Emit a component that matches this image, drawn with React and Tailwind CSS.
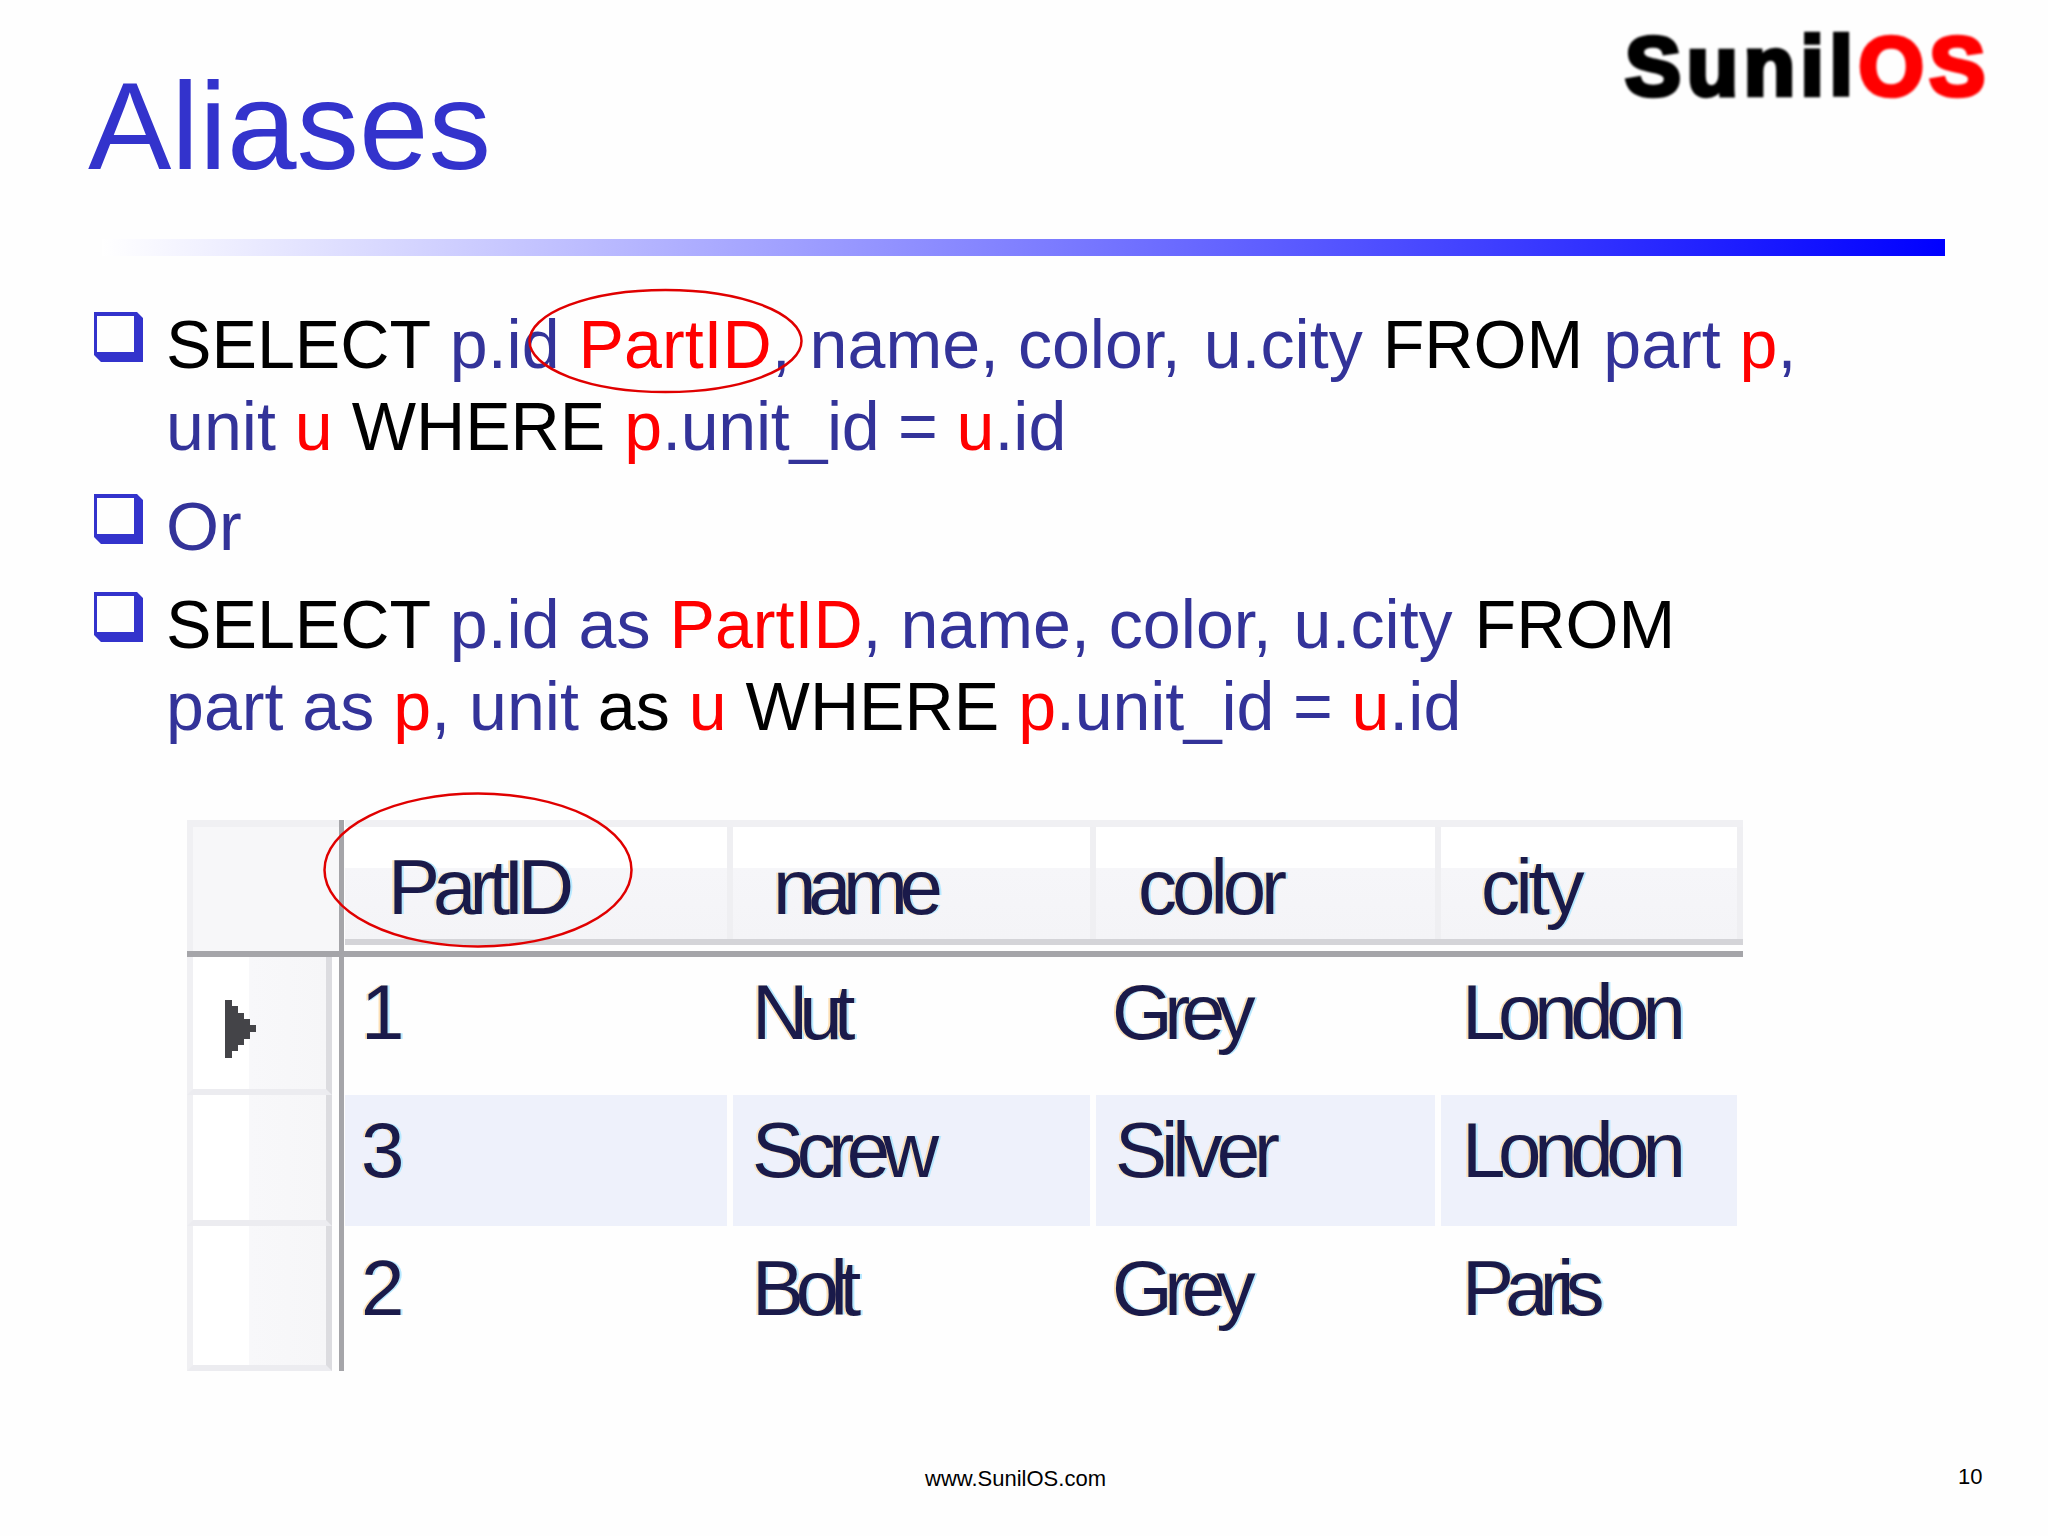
const B = ({ children, className = "" }) => <span className={"text-[#333399] " + className}>{children}</span>;
const R = ({ children }) => <span className="text-[#ff0000]">{children}</span>;

const Bullet = () => (
  <svg viewBox="0 0 49 50" className="w-[49px] h-[50px] mt-[9px] shrink-0 fill-[#3333cc]">
    <path fillRule="evenodd" d="M0 0H43L49 6V50H7L0 43ZM3 4V40H40V4Z" />
  </svg>
);

const Item = ({ className = "", children }) => (
  <div className={"flex gap-[23px] pl-[94px] " + className}>
    <Bullet />
    <p className="text-[68.15px] leading-[82px] text-black whitespace-nowrap">{children}</p>
  </div>
);

const cellText =
  "text-[78px] leading-none text-[#1a1a4a] [text-shadow:-2px_0_#fde0b5,2px_0_#b6e8ff] whitespace-nowrap";

const widths = ["w-[382px]", "w-[357px]", "w-[339px]", "w-[296px]"];
const headPad = ["pl-[43px]", "pl-[40px]", "pl-[42px]", "pl-[40px]"];
const dataPad = ["pl-[16px]", "pl-[19px]", "pl-[16px]", "pl-[21px]"];

const HeaderCell = ({ i, track, children }) => (
  <div className={"h-full flex items-end pb-[13px] bg-[linear-gradient(#ffffff_0,#ffffff_37%,#f6f6f9_37%,#f4f4f7_100%)] " + widths[i] + " " + headPad[i]}>
    <span className={cellText + " " + track}>{children}</span>
  </div>
);

const RowHead = ({ h, arrow }) => (
  <div className={"w-[145px] flex items-center pl-[32px] border-b-[6px] border-b-[#ececf0] border-r-[6px] border-r-[#dcdce0] border-l-[6px] border-l-[#f0f0f3] bg-[linear-gradient(90deg,#ffffff_0,#ffffff_42%,#f8f8fa_42%,#f6f6f8_100%)] " + h}>
    {arrow && (
      <svg viewBox="0 0 31 58" className="w-[31px] h-[58px] fill-[#444448] mt-[12px] blur-[0.6px]">
        <path d="M0 0H7V6H13V13H19V19H25V25H31V32H25V39H19V45H13V51H7V58H0Z" />
      </svg>
    )}
  </div>
);

const Row = ({ h, shade, arrow, pt, cells }) => (
  <div className={"flex " + h}>
    <RowHead h={h} arrow={arrow} />
    <div className="w-[7px]" />
    <div className="w-[5px] mr-[1px] bg-[#a5a5a9]" />
    <div className="flex gap-[6px]">
      {cells.map((c, i) => (
        <div key={i} className={"flex items-start " + pt + " " + widths[i] + " " + dataPad[i] + " " + (shade ? "bg-[#eef1fb]" : "")}>
          <span className={cellText + " " + c.track}>{c.t}</span>
        </div>
      ))}
    </div>
  </div>
);

export default function App() {
  return (
    <div className="relative w-[2048px] h-[1536px] bg-[#fefefe] font-['Liberation_Sans',Arial,sans-serif] overflow-hidden">
      <header className="h-[239px] flex justify-between items-start pl-[88px] pr-[57px]">
        <h1 className="pt-[63px] text-[125px] leading-none text-[#3333cc]">Aliases</h1>
        <div className="pt-[24px] text-[84px] leading-none font-bold tracking-[5.6px] text-black [-webkit-text-stroke:4.5px_#000] blur-[0.8px]">
          Sunil<span className="text-[#ff0000] [-webkit-text-stroke:4.5px_#ff0000]">OS</span>
        </div>
      </header>
      <div className="ml-[102px] w-[1843px] h-[17px] bg-[linear-gradient(90deg,#ffffff,#0000ff)]" />

      <main className="mt-[47px]">
        <Item>
          SELECT <B className="ml-[1px]">p.id</B> <R>PartID</R><B>, name, color, </B><B className="ml-[4px]">u.city</B> <span className="ml-[1px]">FROM</span> <B className="ml-[1px]">part</B> <R>p</R><B>,</B>
          <br />
          <B>unit</B> <R>u</R> WHERE <R>p</R><B className="tracking-[-0.3px]">.unit_id =</B> <R>u</R><B>.id</B>
        </Item>
        <Item className="mt-[18px]">
          <B>Or</B>
        </Item>
        <Item className="mt-[16px]">
          SELECT <B className="ml-[1px]">p.id as</B> <R>PartID</R><B>, name, color, </B><B className="ml-[3px]">u.city</B> <span className="ml-[3px]">FROM</span>
          <br />
          <B>part as</B> <R>p</R><B>, unit</B> as <R>u</R> WHERE <R>p</R><B className="tracking-[-0.2px]">.unit_id =</B> <R>u</R><B>.id</B>
        </Item>
      </main>

      <section className="mt-[73px] ml-[187px] w-[1556px]">
        <div className="flex h-[131px]">
          <div className="w-[152px] bg-[#f7f7f9] border-l-[6px] border-t-[7px] border-[#f0f0f3]" />
          <div className="w-[5px] mr-[1px] bg-[#a5a5a9]" />
          <div className="w-[1398px] h-[125px] flex gap-[6px] bg-[#efeff2] border-t-[7px] border-[#f0f0f3] border-b-[6px] border-b-[#d4d4d8] pr-[5px]">
            <HeaderCell i={0} track="tracking-[-7px]">PartID</HeaderCell>
            <HeaderCell i={1} track="tracking-[-8.4px]">name</HeaderCell>
            <HeaderCell i={2} track="tracking-[-5px]">color</HeaderCell>
            <HeaderCell i={3} track="tracking-[-4.5px]">city</HeaderCell>
          </div>
        </div>
        <div className="h-[6px] bg-[#a5a5a9]" />
        <Row
          h="h-[138px]"
          arrow
          pt="pt-[16px]"
          cells={[
            { t: "1", track: "" },
            { t: "Nut", track: "tracking-[-9px]" },
            { t: "Grey", track: "tracking-[-8.5px]" },
            { t: "London", track: "tracking-[-7.3px]" },
          ]}
        />
        <Row
          h="h-[131px]"
          shade
          pt="pt-[16px]"
          cells={[
            { t: "3", track: "" },
            { t: "Screw", track: "tracking-[-7.4px]" },
            { t: "Silver", track: "tracking-[-6px] ml-[3px]" },
            { t: "London", track: "tracking-[-7.3px]" },
          ]}
        />
        <Row
          h="h-[145px]"
          pt="pt-[23px]"
          cells={[
            { t: "2", track: "" },
            { t: "Bolt", track: "tracking-[-8.4px]" },
            { t: "Grey", track: "tracking-[-8.5px]" },
            { t: "Paris", track: "tracking-[-8.8px]" },
          ]}
        />
      </section>

      <footer className="absolute left-0 top-[1467px] w-full flex justify-center pr-[17px] text-[22px] leading-[24px] text-black">
        www.SunilOS.com
      </footer>
      <div className="absolute left-[1958px] top-[1465px] text-[22px] leading-[24px] text-black">10</div>

      <svg className="absolute left-[527px] top-[288px] w-[277px] h-[106px]" viewBox="0 0 277 106" fill="none">
        <ellipse cx="138.5" cy="53" rx="136" ry="51" stroke="#e00000" strokeWidth="2.5" />
      </svg>
      <svg className="absolute left-[322px] top-[791px] w-[312px] h-[158px]" viewBox="0 0 312 158" fill="none">
        <ellipse cx="156" cy="79" rx="153.5" ry="76.5" stroke="#e00000" strokeWidth="2.5" />
      </svg>
    </div>
  );
}
